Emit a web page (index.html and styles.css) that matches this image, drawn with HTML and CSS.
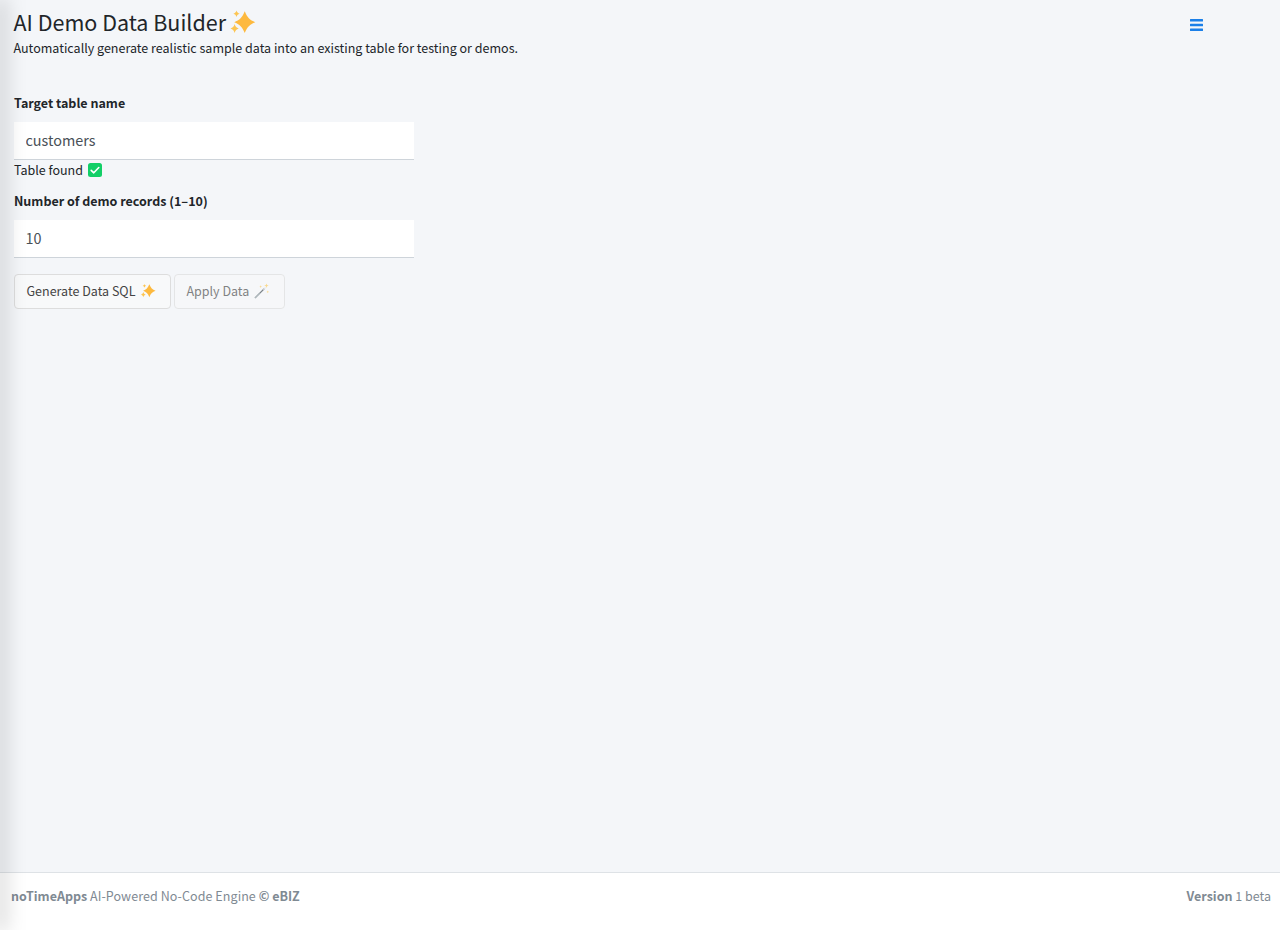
FILE: index.html
```html
<!doctype html>
<html lang="en">
  <head>
    <meta charset="UTF-8" />
    <meta name="viewport" content="width=device-width, initial-scale=1.0" />
    <title>AI Demo Data Builder</title>
    <link rel="stylesheet" href="styles.css">
  </head>
  <body>
    <div class="sidebar-shadow"></div>

    <div class="wrapper">
      <main class="content">
        <header class="page-header">
          <div class="page-title">
            <h1>AI Demo Data Builder
              <svg class="sparkles sparkles-lg" viewBox="0 0 36 36"><use href="#sparkles" /></svg>
            </h1>
            <p class="subtitle">Automatically generate realistic sample data into an existing table for testing or demos.</p>
          </div>
          <a class="menu-toggle" href="#" aria-label="Menu">
            <svg viewBox="0 0 14 12" width="13" height="12" preserveAspectRatio="none"><path d="M.5 0h13a.5.5 0 0 1 .5.5v1.6a.5.5 0 0 1-.5.5H.5a.5.5 0 0 1-.5-.5V.5A.5.5 0 0 1 .5 0zm0 4.7h13a.5.5 0 0 1 .5.5v1.6a.5.5 0 0 1-.5.5H.5a.5.5 0 0 1-.5-.5V5.2a.5.5 0 0 1 .5-.5zm0 4.7h13a.5.5 0 0 1 .5.5v1.6a.5.5 0 0 1-.5.5H.5a.5.5 0 0 1-.5-.5V9.900a.5.5 0 0 1 .5-.5z" /></svg>
          </a>
        </header>

        <form class="builder-form">
          <div class="form-group">
            <label for="table-name">Target table name</label>
            <input id="table-name" type="text" value="customers" />
            <div class="status">Table found
              <svg class="check" viewBox="0 0 14 14" width="14" height="14"><rect width="14" height="14" rx="2.500" fill="#12cf67" /><path d="M3.200 7.300l2.600 2.500 5-5.300" fill="none" stroke="#fff" stroke-width="1.600" stroke-linecap="round" stroke-linejoin="round" /></svg>
            </div>
          </div>

          <div class="form-group">
            <label for="record-count">Number of demo records (1–10)</label>
            <input id="record-count" type="text" value="10" />
          </div>

          <div class="actions">
            <button type="button" class="btn">Generate Data SQL
              <svg class="sparkles" viewBox="0 0 36 36"><use href="#sparkles" /></svg>
            </button>
            <button type="button" class="btn btn-disabled" disabled>Apply Data
              <svg class="wand" viewBox="0 0 36 36">
                <path d="M3 33L23 13" stroke="#3e4a50" stroke-width="2.800" stroke-linecap="round" />
                <path d="M3 33L12 24" stroke="#8d9aa1" stroke-width="2.800" stroke-linecap="round" />
                <path d="M22 14L25 11" stroke="#d5dadd" stroke-width="2.800" stroke-linecap="round" />
                <g fill="#fdcb58">
                  <path d="M28 1l1.300 3.700L33 6l-3.700 1.300L28 11l-1.300-3.700L23 6l3.700-1.300z" />
                  <path d="M15 5l.9 2.100L18 8l-2.100.9L15 11l-.9-2.100L12 8l2.100-.9z" />
                  <path d="M31 17l.9 2.100L34 20l-2.100.9L31 23l-.9-2.100L28 20l2.100-.9z" />
                </g>
              </svg>
            </button>
          </div>
        </form>
      </main>

      <footer class="footer">
        <div><strong>noTimeApps</strong> <span class="tagline">AI-Powered No-Code Engine</span> <strong>© eBIZ</strong></div>
        <div><strong>Version</strong> 1 beta</div>
      </footer>
    </div>

    <svg class="defs" width="0" height="0">
      <symbol id="sparkles" viewBox="0 0 36 36">
        <path fill="#fdb93f" d="M21 3c3 8 7 12 14 14.500-7 2.500-11 6.500-14 14.500-3-8-7-12-14-14.500 7-2.500 11-6.500 14-14.500z" />
        <path fill="#fcc552" d="M7.500 20c1 3.500 2.500 5 5.500 6-3 1-4.500 2.500-5.500 6-1-3.500-2.500-5-5.500-6 3-1 4.500-2.500 5.500-6z" />
        <path fill="#fcc552" d="M10 2c.8 2.600 1.800 3.500 4.200 4.300-2.400.8-3.400 1.700-4.200 4.300-.8-2.600-1.800-3.500-4.200-4.300C8.200 5.500 9.200 4.600 10 2z" />
      </symbol>
    </svg>
  </body>
</html>
```

FILE: styles.css
```css
* {
  box-sizing: border-box;
}
html,
body {
  height: 100%;
}
body {
  margin: 0;
  font-family: "Noto Sans CJK SC", "Noto Sans", sans-serif;
  font-size: 12.5px;
  line-height: 21px;
  color: #212529;
  background-color: #f4f6f9;
}
.sidebar-shadow {
  position: fixed;
  top: 0;
  bottom: 0;
  left: 0;
  width: 0;
  box-shadow: 0 0 20px 2px rgba(0, 0, 0, 0.5);
}
.wrapper {
  display: flex;
  flex-direction: column;
  height: 100vh;
}
.content {
  flex: 1;
  padding: 7px 14px 0;
}
.page-header {
  display: flex;
  justify-content: space-between;
  align-items: flex-start;
  margin-bottom: 34px;
}
.page-title {
  margin-left: -0.5px;
}
h1 {
  display: flex;
  align-items: center;
  gap: 3px;
  margin: 0;
  font-size: 21.5px;
  font-weight: 400;
  line-height: 30px;
}
.subtitle {
  margin: 0;
  font-size: 12.53px;
}
.menu-toggle {
  display: flex;
  margin: 12px 63px 0 0;
}
.menu-toggle svg {
  fill: #1a7fe8;
}
.sparkles {
  width: 16px;
  height: 16px;
}
.sparkles-lg {
  width: 27px;
  height: 27px;
}
.builder-form {
  width: 400px;
}
.form-group {
  margin-bottom: 11px;
}
label {
  display: block;
  margin-bottom: 9px;
  font-weight: 700;
}
input {
  display: block;
  width: 100%;
  height: 38px;
  padding: 0 11.5px 2px;
  border: 0;
  border-bottom: 1px solid #ced4da;
  background: #fff;
  font: inherit;
  font-size: 14.4px;
  color: #495057;
}
.status {
  display: flex;
  align-items: center;
  gap: 5px;
  height: 19px;
}
.actions {
  display: flex;
  gap: 3px;
  margin-top: 16px;
}
.btn {
  display: flex;
  align-items: center;
  gap: 5px;
  height: 35px;
  padding: 0 13.5px 2px 11.5px;
  border: 1px solid #ddd;
  border-radius: 4px;
  background: #f8f9fa;
  font: inherit;
  color: #444;
}
.btn-disabled {
  opacity: 0.65;
}
.wand {
  width: 16px;
  height: 16px;
}
.footer {
  display: flex;
  justify-content: space-between;
  height: 58px;
  padding: 12px 9px 0 11px;
  border-top: 1px solid #dee2e6;
  background: #fff;
  color: #7f8a93;
}
.tagline {
  letter-spacing: 0.08px;
}
.defs {
  position: absolute;
}
```
